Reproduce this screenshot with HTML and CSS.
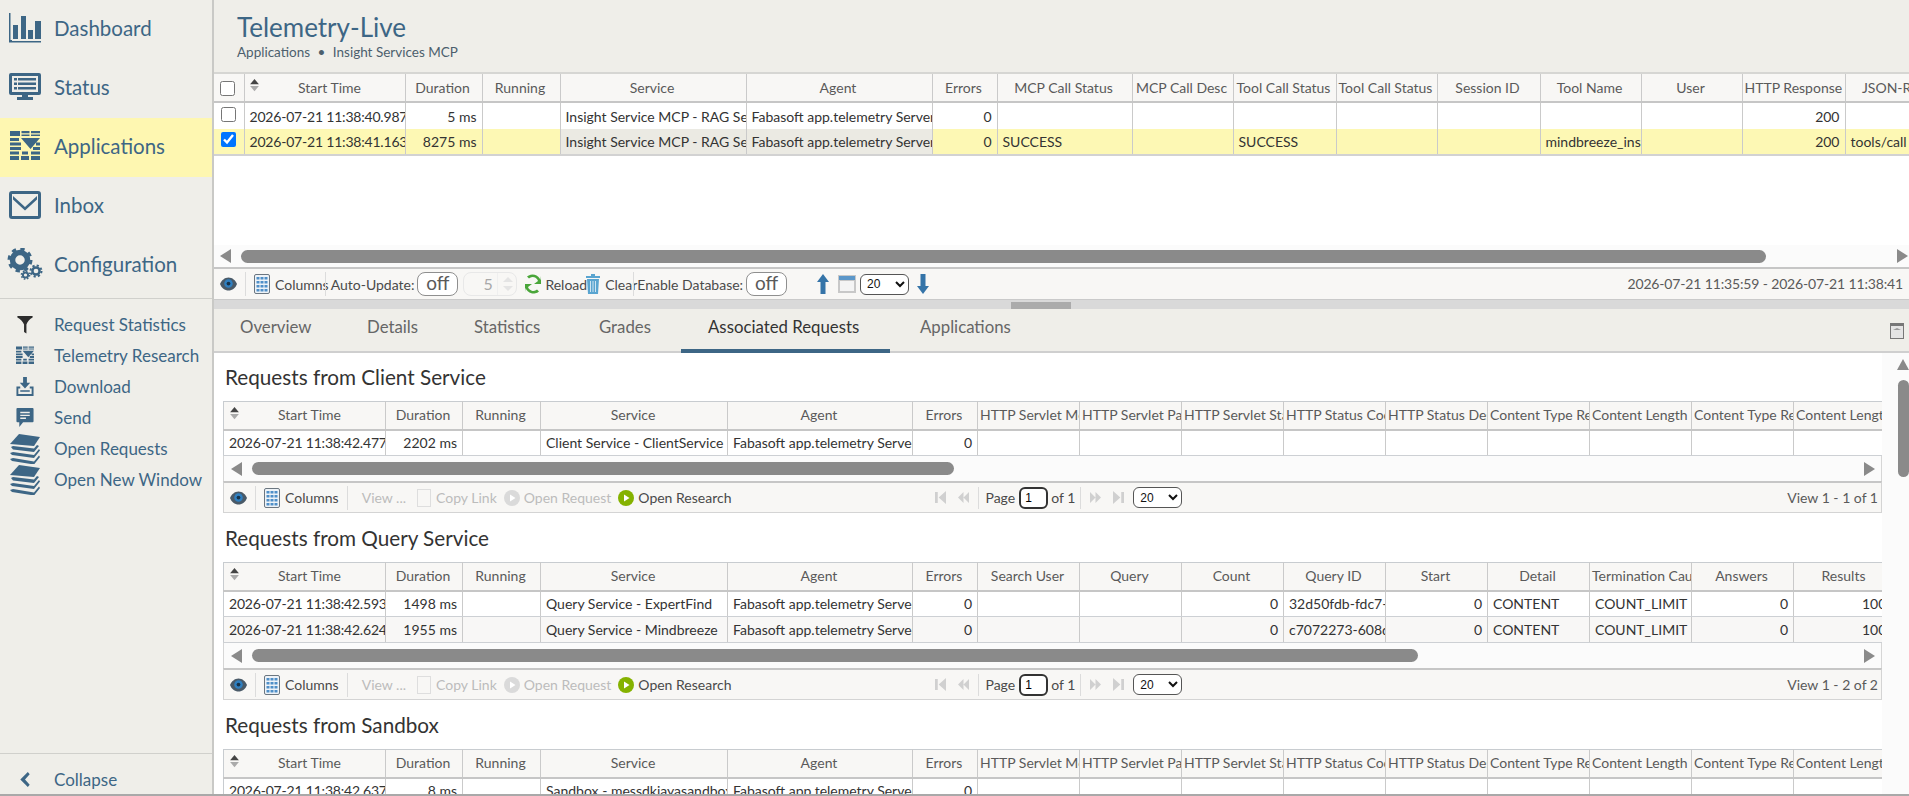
FILE: index.html
```html
<!DOCTYPE html>
<html lang="en">

<head>
    <meta charset="UTF-8">
    <meta name="viewport" content="width=device-width, initial-scale=1.0">
    <title>Telemetry-Live</title>
    <link rel="stylesheet" href="styles.css">
</head>

<body>
    <!-- Icon sprites -->
    <svg class="sprites" xmlns="http://www.w3.org/2000/svg">
        <symbol id="i-chart" viewBox="0 0 32 30">
            <path d="M0 0h1.5v27H32v2.5H0z M3 28h29v-1H3z" />
            <path d="M4 12h5v14H4z M12 3h5v23h-5z M19 17h5v9h-5z M26 8h6v18h-6z" />
        </symbol>
        <symbol id="i-monitor" viewBox="0 0 32 28">
            <path fill-rule="evenodd" d="M2 0h28a2 2 0 0 1 2 2v18a2 2 0 0 1-2 2H19v2h5v3H8v-3h5v-2H2a2 2 0 0 1-2-2V2a2 2 0 0 1 2-2z M3 3v16h26V3z" />
            <path d="M5 5h3v2.5H5z M9 5h18v2.5H9z M5 9.5h3V12H5z M9 9.5h18V12H9z M5 14h3v2.5H5z M9 14h18v2.5H9z" />
        </symbol>
        <symbol id="i-apps" viewBox="0 0 30 30">
            <path d="M0 0h10v5H0z M11.500 0h8v2.200h-8z M21 0h9v2.200h-9z M11.500 3.500h8V5h-8z M21 3.500h9V5h-9z" />
            <path d="M0 7h9v3H0z M0 11.500h11v3H0z M0 16h11v3H0z M0 20.500h9v3H0z M0 25h9v4H0z M11 25h8v4h-8z M21 25h9v4h-9z M21 20.500h9v3h-9z M23 16h7v3h-7z M26 11.500h4v3h-4z M11 7h19l-9.500 11z M12 20.500h6v3h-6z" />
        </symbol>
        <symbol id="i-mail" viewBox="0 0 32 28">
            <path fill-rule="evenodd" d="M3 0h26a3 3 0 0 1 3 3v22a3 3 0 0 1-3 3H3a3 3 0 0 1-3-3V3a3 3 0 0 1 3-3z M3 3v22h26V3z" />
            <path d="M4 5l12 11L28 5v3.500L16 19.500 4 8.500z" />
        </symbol>
        <symbol id="i-gears" viewBox="0 0 36 32">
            <circle cx="13" cy="12" r="7.500" fill="none" stroke="currentColor" stroke-width="5.500" />
            <circle cx="13" cy="12" r="11" fill="none" stroke="currentColor" stroke-width="3" stroke-dasharray="4.300 4.340" />
            <circle cx="29" cy="23" r="3.600" fill="none" stroke="currentColor" stroke-width="2.500" />
            <circle cx="29" cy="23" r="5.500" fill="none" stroke="currentColor" stroke-width="2" stroke-dasharray="2.200 2.120" />
            <circle cx="18.500" cy="27" r="2.600" fill="none" stroke="currentColor" stroke-width="2" />
            <circle cx="18.500" cy="27" r="4.100" fill="none" stroke="currentColor" stroke-width="1.500" stroke-dasharray="1.600 1.620" />
        </symbol>
        <symbol id="i-funnel" viewBox="0 0 16 20">
            <path d="M0 1h16v1.500C13 4 10.500 7 9.500 10v9.500L7 18v-8C6 7 3 4 0 2.500z" />
        </symbol>
        <symbol id="i-download" viewBox="0 0 18 20">
            <path d="M7 0h4v6h3.500L9 12 3.500 6H7z" />
            <path fill-rule="evenodd" d="M0 10h4v2H2v6h14v-6h-2v-2h4v10H0z M4 14h10v1.500H4z" />
        </symbol>
        <symbol id="i-chat" viewBox="0 0 18 20">
            <path fill-rule="evenodd" d="M1 0h16a1 1 0 0 1 1 1v13a1 1 0 0 1-1 1H7l-4 5v-5H1a1 1 0 0 1-1-1V1a1 1 0 0 1 1-1z M4 4v1.500h10V4z M4 7v1.500h10V7z M4 10v1.500h6V10z" />
        </symbol>
        <symbol id="i-layers" viewBox="0 0 30 30">
            <path d="M9 0l21 3-6 9-24-2z" />
            <path d="M3 12l21 2.500 3-3.500 2 1-5 6L3 15.500 1 13z M3 18l21 3 5-6 1 1.500L24 24 2 21 0 19z M3 24l21 3.500 5-6 1 1.500-6 7.500L2 27l-2-2z" />
        </symbol>
        <symbol id="i-chevron" viewBox="0 0 10 16">
            <path d="M8 0l2 2.500L5 8l5 5.500L8 16 0 8z" />
        </symbol>
        <symbol id="i-eye" viewBox="0 0 18 14">
            <path fill="#4a5a68" d="M9 0c4 0 7.500 3 9 7-1.500 4-5 7-9 7s-7.500-3-9-7c1.500-4 5-7 9-7z" />
            <circle cx="9" cy="6.500" r="4.500" fill="#2f7fc0" />
            <circle cx="9" cy="6.500" r="2" fill="#16324a" />
        </symbol>
        <symbol id="i-columns" viewBox="0 0 16 20">
            <rect x="0.500" y="0.500" width="15" height="19" rx="1.500" fill="#eef3f8" stroke="#6b7680" />
            <path fill="#4f8fc8" d="M2.500 3h3v2.500h-3z M6.500 3h3v2.500h-3z M10.500 3h3v2.500h-3z M2.500 7h3v2.500h-3z M6.500 7h3v2.500h-3z M10.500 7h3v2.500h-3z M2.500 11h3v2.500h-3z M6.500 11h3v2.500h-3z M10.500 11h3v2.500h-3z M2.500 15h3v2.500h-3z M6.500 15h3v2.500h-3z M10.500 15h3v2.500h-3z" />
        </symbol>
        <symbol id="i-reload" viewBox="0 0 16 20">
            <path fill="#4aa63a" d="M13 7a5.500 5.500 0 0 0-9-2.500L2 2.500A8.500 8.500 0 0 1 15.500 6L16 2v8h-7l4-3z" />
            <path fill="#4aa63a" d="M3 13a5.500 5.500 0 0 0 9 2.500l2 2A8.500 8.500 0 0 1 .5 14L0 18v-8h7l-4 3z" />
        </symbol>
        <symbol id="i-trash" viewBox="0 0 14 20">
            <path fill="#5aa5d0" d="M0 2h5V0h4v2h5v2H0z M1 5h12l-1 15H2z" />
            <path fill="#cfe5f2" d="M4 7h1v11H4z M6.500 7h1v11h-1z M9 7h1v11H9z" />
        </symbol>
        <symbol id="i-play" viewBox="0 0 16 16">
            <circle cx="8" cy="8" r="8" />
            <path fill="#fff" d="M6 4.500L11.500 8 6 11.500z" />
        </symbol>
        <symbol id="i-up" viewBox="0 0 12 20">
            <path fill="#3574a8" d="M6 0l6 8H8.500v12h-5V8H0z" />
        </symbol>
        <symbol id="i-down" viewBox="0 0 12 20">
            <path fill="#3574a8" d="M6 20L0 12h3.500V0h5v12H12z" />
        </symbol>
        <symbol id="i-calendar" viewBox="0 0 18 18">
            <path fill="#c8c8c8" d="M0 0h18v18H0z" />
            <path fill="#5c97c9" d="M1 1h16v4H1z" />
            <path fill="#f4f4f4" d="M2 6h14v10H2z" />
        </symbol>
        <symbol id="i-pane" viewBox="0 0 14 16">
            <path fill="#777" d="M0 0h14v16H0z" />
            <path fill="#e4e4e4" d="M1 3h12v12H1z" />
            <path fill="#999" d="M3 7l4-2 4 2z" />
        </symbol>
        <symbol id="i-first" viewBox="0 0 12 14">
            <path d="M0 1h3v12H0z M12 0v14L4 7z" />
        </symbol>
        <symbol id="i-prev" viewBox="0 0 14 14">
            <path d="M7 0v14L0 7z M14 0v14L7 7z" />
        </symbol>
        <symbol id="i-next" viewBox="0 0 14 14">
            <path d="M0 0v14l7-7z M7 0v14l7-7z" />
        </symbol>
        <symbol id="i-last" viewBox="0 0 12 14">
            <path d="M9 1h3v12H9z M0 0v14l8-7z" />
        </symbol>
        <symbol id="i-sort" viewBox="0 0 10 16">
            <path fill="#444" d="M5 0l5 6H0z" />
            <path fill="#aaa" d="M0 8h10l-5 6z" />
        </symbol>
    </svg>

    <div class="app">
        <!-- Sidebar -->
        <aside class="sidebar">
            <nav class="main-nav">
                <a class="nav-item"><svg class="nav-icon"><use href="#i-chart" /></svg>Dashboard</a>
                <a class="nav-item"><svg class="nav-icon"><use href="#i-monitor" /></svg>Status</a>
                <a class="nav-item active"><svg class="nav-icon"><use href="#i-apps" /></svg>Applications</a>
                <a class="nav-item"><svg class="nav-icon"><use href="#i-mail" /></svg>Inbox</a>
                <a class="nav-item"><svg class="nav-icon gears"><use href="#i-gears" /></svg>Configuration</a>
            </nav>
            <nav class="sub-nav">
                <a class="sub-item"><span class="sub-slot"><svg class="sub-icon dark"><use href="#i-funnel" /></svg></span>Request Statistics</a>
                <a class="sub-item"><span class="sub-slot"><svg class="sub-icon"><use href="#i-apps" /></svg></span>Telemetry Research</a>
                <a class="sub-item"><span class="sub-slot"><svg class="sub-icon"><use href="#i-download" /></svg></span>Download</a>
                <a class="sub-item"><span class="sub-slot"><svg class="sub-icon"><use href="#i-chat" /></svg></span>Send</a>
                <a class="sub-item"><span class="sub-slot"><svg class="sub-icon big"><use href="#i-layers" /></svg></span>Open Requests</a>
                <a class="sub-item"><span class="sub-slot"><svg class="sub-icon big"><use href="#i-layers" /></svg></span>Open New Window</a>
            </nav>
            <a class="collapse"><span class="sub-slot"><svg class="chevron"><use href="#i-chevron" /></svg></span>Collapse</a>
        </aside>

        <main class="content">
            <header class="page-header">
                <h1>Telemetry-Live</h1>
                <div class="crumbs">Applications <span class="dot">•</span> Insight Services MCP</div>
            </header>

            <!-- Live requests -->
            <div class="live-panel">
                <div class="grid-clip">
                    <table class="grid live-grid">
                        <colgroup>
                            <col class="c30"><col class="c161"><col class="c77"><col class="c78"><col class="c186"><col class="c186"><col class="c65"><col class="c135"><col class="c101"><col class="c103"><col class="c101"><col class="c103"><col class="c101"><col class="c101"><col class="c103"><col class="c103">
                        </colgroup>
                        <thead>
                            <tr>
                                <th><input type="checkbox"></th>
                                <th class="sortable"><svg class="sort"><use href="#i-sort" /></svg>Start Time</th>
                                <th>Duration</th><th>Running</th><th>Service</th><th>Agent</th><th>Errors</th>
                                <th>MCP Call Status</th><th>MCP Call Desc</th><th>Tool Call Status</th><th>Tool Call Status</th>
                                <th>Session ID</th><th>Tool Name</th><th>User</th><th>HTTP Response</th><th>JSON-RPC</th>
                            </tr>
                        </thead>
                        <tbody>
                            <tr>
                                <td class="ctr"><input type="checkbox"></td>
                                <td class="time">2026-07-21 11:38:40.987</td><td class="num">5 ms</td><td></td>
                                <td>Insight Service MCP - RAG Search</td><td>Fabasoft app.telemetry Server</td><td class="num">0</td>
                                <td></td><td></td><td></td><td></td><td></td><td></td><td></td><td class="num">200</td><td></td>
                            </tr>
                            <tr class="selected">
                                <td class="ctr"><input type="checkbox" checked></td>
                                <td class="time">2026-07-21 11:38:41.163</td><td class="num">8275 ms</td><td></td>
                                <td class="muted">Insight Service MCP - RAG Search</td><td class="muted">Fabasoft app.telemetry Server</td><td class="num">0</td>
                                <td>SUCCESS</td><td></td><td>SUCCESS</td><td></td><td></td><td>mindbreeze_insight</td><td></td><td class="num">200</td><td>tools/call</td>
                            </tr>
                        </tbody>
                    </table>
                </div>
                <div class="hscroll">
                    <span class="arrow-left"></span>
                    <span class="track"><span class="thumb thumb-live"></span></span>
                    <span class="arrow-right"></span>
                </div>
                <div class="live-toolbar">
                    <svg class="t-eye"><use href="#i-eye" /></svg>
                    <span class="t-sep"></span>
                    <svg class="t-cols"><use href="#i-columns" /></svg>
                    <span class="t-label">Columns</span>
                    <span class="t-sep tight"></span>
                    <span class="t-label">Auto-Update:</span>
                    <span class="toggle">off</span>
                    <span class="spinner"><span class="spin-val">5</span><span class="spin-arrows"></span></span>
                    <svg class="t-reload"><use href="#i-reload" /></svg>
                    <span class="t-label">Reload</span>
                    <svg class="t-trash"><use href="#i-trash" /></svg>
                    <span class="t-label">Clear</span>
                    <span class="t-sep tight-db"></span>
                    <span class="t-label">Enable Database:</span>
                    <span class="toggle">off</span>
                    <svg class="t-up"><use href="#i-up" /></svg>
                    <svg class="t-cal"><use href="#i-calendar" /></svg>
                    <select class="page-size"><option>20</option></select>
                    <svg class="t-down"><use href="#i-down" /></svg>
                    <span class="range">2026-07-21 11:35:59 - 2026-07-21 11:38:41</span>
                </div>
            </div>

            <div class="splitter"><span class="split-handle"></span></div>

            <!-- Tabs -->
            <div class="tabs">
                <a class="tab t-overview">Overview</a>
                <a class="tab t-details">Details</a>
                <a class="tab t-stats">Statistics</a>
                <a class="tab t-grades">Grades</a>
                <a class="tab t-assoc active">Associated Requests</a>
                <a class="tab t-apps">Applications</a>
                <svg class="pane-icon"><use href="#i-pane" /></svg>
            </div>

            <div class="detail-wrap">
                <div class="detail">
                    <!-- Client service -->
                    <h2>Requests from Client Service</h2>
                    <div class="grid-clip">
                        <table class="grid sub-grid">
                            <colgroup>
                                <col class="c162"><col class="c77"><col class="c78"><col class="c187"><col class="c185"><col class="c65"><col class="c102"><col class="c102"><col class="c102"><col class="c102"><col class="c102"><col class="c102"><col class="c102"><col class="c102"><col class="c102">
                            </colgroup>
                            <thead>
                                <tr>
                                    <th class="sortable"><svg class="sort"><use href="#i-sort" /></svg>Start Time</th>
                                    <th>Duration</th><th>Running</th><th>Service</th><th>Agent</th><th>Errors</th>
                                    <th>HTTP Servlet Method</th><th>HTTP Servlet Path</th><th>HTTP Servlet Status</th><th>HTTP Status Code</th><th>HTTP Status Desc</th>
                                    <th>Content Type Request</th><th>Content Length Request</th><th>Content Type Response</th><th>Content Length Response</th>
                                </tr>
                            </thead>
                            <tbody>
                                <tr>
                                    <td class="time">2026-07-21 11:38:42.477</td><td class="num">2202 ms</td><td></td>
                                    <td>Client Service - ClientService</td><td>Fabasoft app.telemetry Server</td><td class="num">0</td>
                                    <td></td><td></td><td></td><td></td><td></td><td></td><td></td><td></td><td></td>
                                </tr>
                            </tbody>
                        </table>
                    </div>
                    <div class="hscroll sub">
                        <span class="arrow-left"></span>
                        <span class="track"><span class="thumb thumb-client"></span></span>
                        <span class="arrow-right"></span>
                    </div>
                    <div class="pager-bar">
                        <svg class="t-eye"><use href="#i-eye" /></svg>
                        <span class="t-sep"></span>
                        <svg class="t-cols"><use href="#i-columns" /></svg>
                        <span class="t-label">Columns</span>
                        <span class="t-sep wide"></span>
                        <span class="t-label off">View ...</span>
                        <span class="copy-icon"></span>
                        <span class="t-label off">Copy Link</span>
                        <svg class="t-play off-play"><use href="#i-play" /></svg>
                        <span class="t-label off">Open Request</span>
                        <svg class="t-play on-play"><use href="#i-play" /></svg>
                        <span class="t-label">Open Research</span>
                        <div class="pager">
                            <svg class="p-icon"><use href="#i-first" /></svg>
                            <svg class="p-icon"><use href="#i-prev" /></svg>
                            <span class="t-sep"></span>
                            <span class="t-label">Page</span>
                            <input class="page-input" type="text" value="1">
                            <span class="t-label">of 1</span>
                            <span class="t-sep after"></span>
                            <svg class="p-icon"><use href="#i-next" /></svg>
                            <svg class="p-icon"><use href="#i-last" /></svg>
                            <select class="page-size"><option>20</option></select>
                        </div>
                        <span class="view-count">View 1 - 1 of 1</span>
                    </div>

                    <!-- Query service -->
                    <h2>Requests from Query Service</h2>
                    <div class="grid-clip">
                        <table class="grid sub-grid">
                            <colgroup>
                                <col class="c162"><col class="c77"><col class="c78"><col class="c187"><col class="c185"><col class="c65"><col class="c102"><col class="c102"><col class="c102"><col class="c102"><col class="c102"><col class="c102"><col class="c102"><col class="c102"><col class="c102">
                            </colgroup>
                            <thead>
                                <tr>
                                    <th class="sortable"><svg class="sort"><use href="#i-sort" /></svg>Start Time</th>
                                    <th>Duration</th><th>Running</th><th>Service</th><th>Agent</th><th>Errors</th>
                                    <th>Search User</th><th>Query</th><th>Count</th><th>Query ID</th><th>Start</th><th>Detail</th><th>Termination Cause</th><th>Answers</th><th>Results</th>
                                </tr>
                            </thead>
                            <tbody>
                                <tr>
                                    <td class="time">2026-07-21 11:38:42.593</td><td class="num">1498 ms</td><td></td>
                                    <td>Query Service - ExpertFind</td><td>Fabasoft app.telemetry Server</td><td class="num">0</td>
                                    <td></td><td></td><td class="num">0</td><td>32d50fdb-fdc7-4a1e</td><td class="num">0</td><td>CONTENT</td><td>COUNT_LIMIT</td><td class="num">0</td><td class="num cut">100</td>
                                </tr>
                                <tr class="alt">
                                    <td class="time">2026-07-21 11:38:42.624</td><td class="num">1955 ms</td><td></td>
                                    <td>Query Service - Mindbreeze</td><td>Fabasoft app.telemetry Server</td><td class="num">0</td>
                                    <td></td><td></td><td class="num">0</td><td>c7072273-608d-4b2c</td><td class="num">0</td><td>CONTENT</td><td>COUNT_LIMIT</td><td class="num">0</td><td class="num cut">100</td>
                                </tr>
                            </tbody>
                        </table>
                    </div>
                    <div class="hscroll sub">
                        <span class="arrow-left"></span>
                        <span class="track"><span class="thumb thumb-query"></span></span>
                        <span class="arrow-right"></span>
                    </div>
                    <div class="pager-bar">
                        <svg class="t-eye"><use href="#i-eye" /></svg>
                        <span class="t-sep"></span>
                        <svg class="t-cols"><use href="#i-columns" /></svg>
                        <span class="t-label">Columns</span>
                        <span class="t-sep wide"></span>
                        <span class="t-label off">View ...</span>
                        <span class="copy-icon"></span>
                        <span class="t-label off">Copy Link</span>
                        <svg class="t-play off-play"><use href="#i-play" /></svg>
                        <span class="t-label off">Open Request</span>
                        <svg class="t-play on-play"><use href="#i-play" /></svg>
                        <span class="t-label">Open Research</span>
                        <div class="pager">
                            <svg class="p-icon"><use href="#i-first" /></svg>
                            <svg class="p-icon"><use href="#i-prev" /></svg>
                            <span class="t-sep"></span>
                            <span class="t-label">Page</span>
                            <input class="page-input" type="text" value="1">
                            <span class="t-label">of 1</span>
                            <span class="t-sep after"></span>
                            <svg class="p-icon"><use href="#i-next" /></svg>
                            <svg class="p-icon"><use href="#i-last" /></svg>
                            <select class="page-size"><option>20</option></select>
                        </div>
                        <span class="view-count">View 1 - 2 of 2</span>
                    </div>

                    <!-- Sandbox -->
                    <h2>Requests from Sandbox</h2>
                    <div class="grid-clip">
                        <table class="grid sub-grid">
                            <colgroup>
                                <col class="c162"><col class="c77"><col class="c78"><col class="c187"><col class="c185"><col class="c65"><col class="c102"><col class="c102"><col class="c102"><col class="c102"><col class="c102"><col class="c102"><col class="c102"><col class="c102"><col class="c102">
                            </colgroup>
                            <thead>
                                <tr>
                                    <th class="sortable"><svg class="sort"><use href="#i-sort" /></svg>Start Time</th>
                                    <th>Duration</th><th>Running</th><th>Service</th><th>Agent</th><th>Errors</th>
                                    <th>HTTP Servlet Method</th><th>HTTP Servlet Path</th><th>HTTP Servlet Status</th><th>HTTP Status Code</th><th>HTTP Status Desc</th>
                                    <th>Content Type Request</th><th>Content Length Request</th><th>Content Type Response</th><th>Content Length Response</th>
                                </tr>
                            </thead>
                            <tbody>
                                <tr>
                                    <td class="time">2026-07-21 11:38:42.637</td><td class="num">8 ms</td><td></td>
                                    <td>Sandbox - messdkiayasandbox</td><td>Fabasoft app.telemetry Server</td><td class="num">0</td>
                                    <td></td><td></td><td></td><td></td><td></td><td></td><td></td><td></td><td></td>
                                </tr>
                            </tbody>
                        </table>
                    </div>
                </div>
                <div class="vscroll">
                    <span class="arrow-up"></span>
                    <span class="vthumb"></span>
                </div>
            </div>
        </main>
    </div>
</body>

</html>
```

FILE: styles.css
```css
* {
    box-sizing: border-box;
}

html,
body {
    margin: 0;
    padding: 0;
    height: 100%;
    overflow: hidden;
}

body {
    font-family: "Lato", "Open Sans", sans-serif;
    font-size: 14px;
    color: #333;
    background-color: #fff;
}

.sprites {
    display: none;
}

.app {
    display: flex;
    height: 796px;
    border-bottom: 2px solid #a9a9a9;
    overflow: hidden;
}

/* Sidebar */
.sidebar {
    width: 214px;
    flex: none;
    display: flex;
    flex-direction: column;
    background-color: #efeee9;
    border-right: 2px solid #c9c9c6;
    color: #3d6685;
}

.main-nav {
    height: 299px;
    border-bottom: 1px solid #d0d0cc;
}

.nav-item {
    display: flex;
    align-items: center;
    height: 59px;
    font-size: 20.5px;
    padding-left: 9px;
    padding-bottom: 3px;
}

.nav-item.active {
    background-color: #fef7b1;
}

.nav-icon {
    width: 32px;
    height: 30px;
    margin-right: 13px;
    fill: #3d6685;
    color: #3d6685;
}

.nav-icon.gears {
    width: 36px;
    height: 32px;
    margin-left: -2px;
    margin-right: 11px;
}

.sub-nav {
    padding-top: 10px;
}

.sub-item,
.collapse {
    display: flex;
    align-items: center;
    height: 31px;
    font-size: 17px;
}

.sub-slot {
    width: 54px;
    display: flex;
    justify-content: center;
    padding-right: 4px;
    flex: none;
}

.sub-icon {
    width: 18px;
    height: 19px;
    fill: #3d6685;
}

.sub-icon.dark {
    fill: #2c2c2c;
}

.sub-icon.big {
    width: 30px;
    height: 30px;
}

.collapse {
    margin-top: auto;
    height: 41px;
    padding-top: 11px;
    border-top: 1px solid #d0d0cc;
}

.chevron {
    width: 10px;
    height: 15px;
    fill: #3d6685;
}

/* Main area */
.content {
    flex: 1;
    min-width: 0;
    display: flex;
    flex-direction: column;
    overflow: hidden;
}

.page-header {
    height: 74px;
    flex: none;
    padding: 11px 0 0 23px;
    background-color: #efeee9;
    border-bottom: 2px solid #d6d6d3;
}

h1 {
    margin: 0;
    font-size: 26px;
    font-weight: 400;
    line-height: 32px;
    color: #3d6685;
}

.crumbs {
    font-size: 13.5px;
    line-height: 18px;
    margin-top: 0;
    color: #4c5f6d;
}

.dot {
    margin: 0 4px;
}

.grid-clip {
    overflow: hidden;
}

/* Grids */
.grid {
    border-collapse: collapse;
    table-layout: fixed;
}

.grid th,
.grid td {
    padding: 0 5px;
    white-space: nowrap;
    overflow: hidden;
    border-right: 1px solid #cacaca;
    font-size: 14px;
}

.grid th {
    position: relative;
    height: 28px;
    font-weight: 400;
    text-align: center;
    color: #5a5a5a;
    background-color: #f8f7f5;
    border-bottom: 2px solid #c6c6c6;
    padding: 0 4px 1px 2px;
}

.grid th.sortable {
    padding-left: 14px;
}

.grid td {
    height: 27px;
    color: #333;
}

.grid td.time {
    letter-spacing: -0.2px;
}

.live-grid {
    width: 1734px;
}

.live-grid tbody tr:last-child td {
    border-bottom: 2px solid #d2d2d2;
    height: 26px;
}

.sub-grid {
    width: 1659px;
}

.sub-grid th {
    border-top: 1px solid #c8ccd0;
}

.sub-grid th:first-child,
.sub-grid td:first-child {
    border-left: 1px solid #c8ccd0;
}

.sub-grid td {
    border-bottom: 1px solid #cdd0d4;
    height: 26px;
}

.grid .num {
    text-align: right;
}

.grid .cut {
    text-align: left;
    padding-left: 68px;
}

.grid .ctr {
    text-align: center;
    padding: 0;
}

.grid input[type="checkbox"] {
    margin: 0;
    width: 15px;
    height: 15px;
    vertical-align: middle;
}

.grid td input[type="checkbox"] {
    margin-bottom: 4px;
}

.selected td {
    background-color: #fdf8b4;
}

.selected td.muted {
    background-color: #ebeae3;
}

.alt td {
    background-color: #f8f7f6;
}

.sort {
    position: absolute;
    left: 6px;
    top: 5px;
    width: 9px;
    height: 14px;
}

.live-grid .sort {
    left: 5px;
}

.c30 { width: 30px; }
.c65 { width: 65px; }
.c77 { width: 77px; }
.c78 { width: 78px; }
.c101 { width: 101px; }
.c102 { width: 102px; }
.c103 { width: 103px; }
.c135 { width: 135px; }
.c161 { width: 161px; }
.c162 { width: 162px; }
.c185 { width: 185px; }
.c186 { width: 186px; }
.c187 { width: 187px; }

/* Scrollbars */
.live-panel {
    height: 226px;
    flex: none;
    display: flex;
    flex-direction: column;
}

.live-panel .grid-clip {
    flex: 1;
}

.hscroll {
    display: flex;
    align-items: center;
    height: 22px;
    flex: none;
    background-color: #fbfbfb;
    padding: 0 0 0 6px;
}

.hscroll.sub {
    height: 25px;
    padding-left: 7px;
    border-left: 1px solid #d6d6d6;
    border-right: 1px solid #d6d6d6;
}

.arrow-left,
.arrow-right {
    flex: none;
    width: 0;
    height: 0;
    border-top: 7px solid transparent;
    border-bottom: 7px solid transparent;
}

.arrow-left {
    border-right: 11px solid #8a8a8a;
}

.arrow-right {
    border-left: 11px solid #8a8a8a;
    margin-right: 1px;
}

.track {
    flex: 1;
    display: block;
    padding-left: 10px;
}

.thumb {
    display: block;
    height: 13px;
    border-radius: 7px;
    background-color: #8a8a8a;
}

.thumb-live {
    width: 1525px;
}

.thumb-client {
    width: 702px;
}

.thumb-query {
    width: 1166px;
}

.hscroll.sub .arrow-right {
    margin-right: 6px;
}

/* Toolbars */
.live-toolbar,
.pager-bar {
    display: flex;
    align-items: center;
    flex: none;
    background-color: #f8f7f5;
    border-top: 2px solid #c6c6c6;
}

.live-toolbar {
    height: 33px;
    padding-left: 6px;
    border-bottom: 1px solid #cacaca;
}

.pager-bar {
    height: 32px;
    margin-bottom: 1px;
    padding: 0 3px 0 6px;
    border: 1px solid #d4d4d4;
    border-top: 2px solid #c6c6c6;
}

.t-eye {
    width: 17px;
    height: 14px;
    flex: none;
}

.t-sep {
    width: 1px;
    height: 24px;
    flex: none;
    margin: 0 8px;
    background-color: #dcdcdc;
}

.t-sep.tight {
    margin: 0 5px 0 -4px;
}

.t-sep.tight-db {
    margin: 0 3px 0 -4px;
}

.t-sep.wide {
    margin-right: 14px;
}

.t-cols {
    width: 16px;
    height: 20px;
    flex: none;
    margin-right: 5px;
}

.t-label {
    font-size: 14px;
    white-space: nowrap;
    color: #4a4a4a;
    flex: none;
}

.t-label.off {
    color: #bcbcbc;
}

.toggle {
    width: 41px;
    height: 24px;
    flex: none;
    margin: 0 5px 0 3px;
    border: 1px solid #8f8f8f;
    border-radius: 8px;
    background-color: #fff;
    font-size: 19px;
    line-height: 20px;
    text-align: center;
    color: #5a5a5a;
}

.spinner {
    display: flex;
    width: 54px;
    height: 24px;
    flex: none;
    border: 1px solid #e8e8e8;
    border-radius: 8px;
    color: #a8a8a8;
    font-size: 16px;
    line-height: 22px;
    margin-right: 8px;
}

.spin-val {
    width: 33px;
    padding-left: 19px;
}

.spin-arrows {
    position: relative;
    flex: 1;
    border-left: 1px solid #efefef;
}

.spin-arrows::before,
.spin-arrows::after {
    content: "";
    position: absolute;
    left: 5px;
    width: 0;
    height: 0;
    border-left: 5px solid transparent;
    border-right: 5px solid transparent;
}

.spin-arrows::before {
    top: 4px;
    border-bottom: 5px solid #e4e4e4;
}

.spin-arrows::after {
    bottom: 4px;
    border-top: 5px solid #e4e4e4;
}

.t-reload {
    width: 16px;
    height: 20px;
    flex: none;
    margin-right: 4px;
}

.t-trash {
    width: 14px;
    height: 20px;
    flex: none;
    margin: 0 5px 0 -1px;
}

.t-up,
.t-down {
    width: 12px;
    height: 20px;
    flex: none;
}

.t-up {
    margin-left: 25px;
    margin-right: 9px;
}

.t-cal {
    width: 18px;
    height: 18px;
    flex: none;
    margin-right: 4px;
}

.t-down {
    margin-left: 8px;
}

.page-size {
    width: 49px;
    height: 21px;
    flex: none;
    padding: 0 0 0 2px;
    font-family: "Liberation Sans", sans-serif;
    font-size: 12px;
    border: 1px solid #555;
    border-radius: 6px;
    background-color: #fff;
    color: #111;
}

.range {
    margin-left: auto;
    padding-right: 6px;
    padding-bottom: 1px;
    font-size: 14px;
    letter-spacing: -0.15px;
    color: #5a5a5a;
}

.copy-icon {
    position: relative;
    width: 14px;
    height: 18px;
    flex: none;
    margin: 0 5px 0 11px;
    border: 1px solid #dedede;
}

.t-play {
    width: 16px;
    height: 16px;
    flex: none;
    margin: 0 4px 0 7px;
}

.off-play {
    fill: #dadada;
}

.on-play {
    fill: #85b200;
}

.pager {
    display: flex;
    align-items: center;
    margin-left: 204px;
}

.p-icon {
    width: 11px;
    height: 13px;
    flex: none;
    margin-right: 12px;
    fill: #d0d0d0;
}

.pager .t-sep {
    margin: 0 6px 0 -3px;
    height: 22px;
}

.pager .t-sep.after {
    margin: 0 9px 0 5px;
}

.pager .p-icon:nth-of-type(4) {
    margin-right: 9px;
}

.page-input {
    width: 29px;
    height: 22px;
    margin: 0 3px 0 4px;
    padding: 0 0 0 4px;
    font-family: "Liberation Sans", sans-serif;
    font-size: 12px;
    border: 2px solid #333;
    border-radius: 6px;
}

.view-count {
    margin-left: auto;
    font-size: 14px;
    color: #5a5a5a;
}

.splitter {
    height: 9px;
    flex: none;
    display: flex;
    justify-content: center;
    padding-right: 0;
    background-color: #d9d9d9;
}

.split-handle {
    width: 60px;
    margin-left: -42px;
    margin-top: 2px;
    background-color: #ababab;
}

/* Tabs */
.tabs {
    position: relative;
    height: 44px;
    flex: none;
    display: flex;
    background-color: #efeee9;
    border-bottom: 2px solid #cfcfcf;
}

.tab {
    height: 42px;
    padding-top: 7px;
    font-size: 16.8px;
    color: #666;
    flex: none;
}

.tab.active {
    color: #333;
    border-bottom: 4px solid #3d6685;
    margin-bottom: -2px;
    height: 44px;
    padding-left: 27px;
    width: 209px;
}

.t-overview { margin-left: 26px; width: 127px; }
.t-details { width: 107px; }
.t-stats { width: 125px; }
.t-grades { width: 82px; }
.t-apps { margin-left: 30px; }

.pane-icon {
    position: absolute;
    right: 5px;
    top: 14px;
    width: 14px;
    height: 16px;
}

.detail-wrap {
    flex: 1;
    min-height: 0;
    display: flex;
}

.detail {
    width: 1668px;
    padding-left: 9px;
    flex: none;
    overflow: hidden;
}

h2 {
    margin: 0;
    height: 48px;
    padding: 11px 0 0 2px;
    font-size: 20.7px;
    line-height: 26px;
    font-weight: 400;
    color: #333;
}

.vscroll {
    flex: 1;
    position: relative;
    background-color: #fbfbfb;
}

.arrow-up {
    position: absolute;
    top: 6px;
    right: 0;
    width: 0;
    height: 0;
    border-left: 6px solid transparent;
    border-right: 6px solid transparent;
    border-bottom: 11px solid #8a8a8a;
}

.vthumb {
    position: absolute;
    top: 27px;
    right: 0;
    width: 11px;
    height: 97px;
    border-radius: 6px;
    background-color: #8a8a8a;
}
```
